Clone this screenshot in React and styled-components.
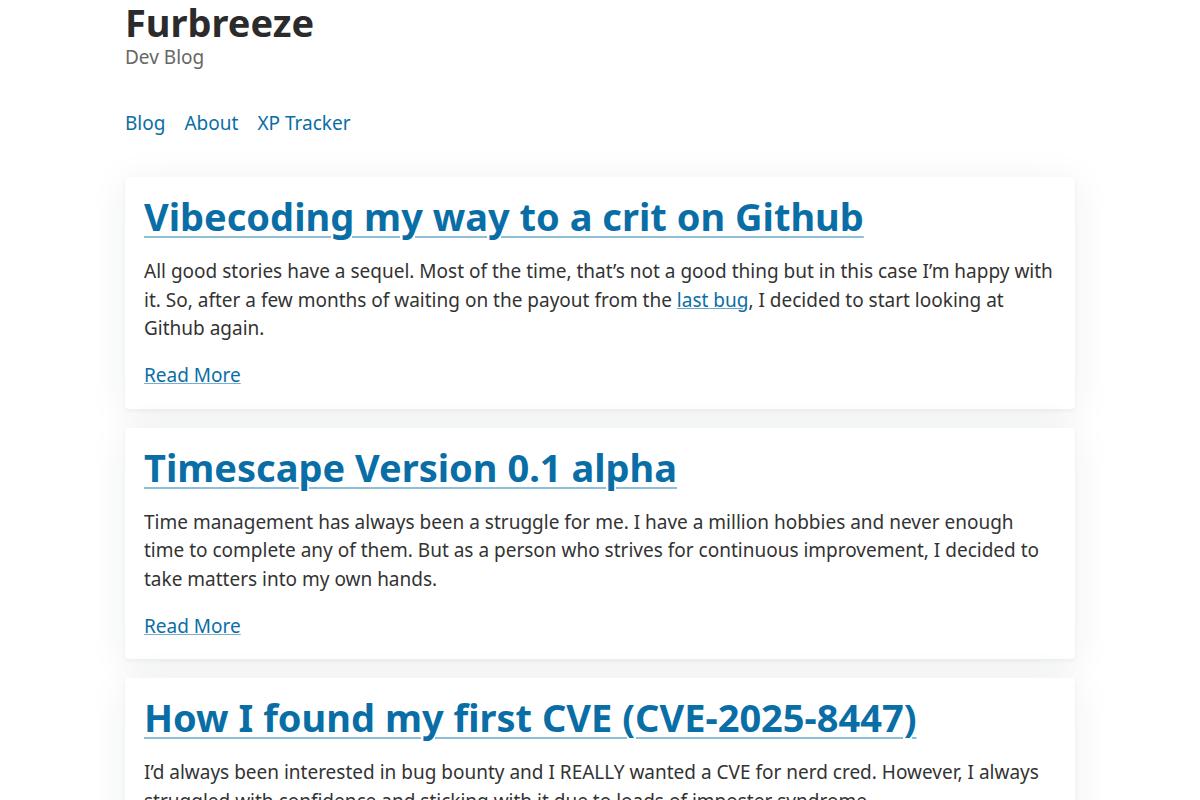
import React from 'react'
import styled, { createGlobalStyle } from 'styled-components'

const GlobalStyle = createGlobalStyle`
  body {
    margin: 0;
    background: #ffffff;
    font-family: "Noto Sans", "Open Sans", sans-serif;
    color: #333;
  }
`

const Page = styled.div`
  width: 950px;
  margin: 0 auto;
`

const Header = styled.header`
  display: flex;
  flex-direction: column;
`

const SiteTitle = styled.h1`
  margin: 0;
  font-size: 38px;
  line-height: 45px;
  font-weight: 700;
  color: #2b2b2b;
`

const Tagline = styled.div`
  font-size: 19px;
  line-height: 24px;
  color: #666;
`

const Nav = styled.nav`
  display: flex;
  gap: 19px;
  margin-top: 40px;
`

const NavLink = styled.a`
  font-size: 19px;
  line-height: 28.5px;
  color: #0a6ea6;
  text-decoration: none;
`

const Posts = styled.div`
  display: flex;
  flex-direction: column;
  gap: 19px;
  margin-top: 39.5px;
`

const Card = styled.article`
  background: #fff;
  border-radius: 4px;
  padding: 19px;
  box-shadow: 0 2px 4px rgba(30, 40, 60, 0.05), 0 6px 40px rgba(30, 40, 60, 0.07);
`

const PostTitle = styled.h2`
  margin: 0 0 20px;
  font-size: 38px;
  line-height: 41px;
  font-weight: 700;

  a {
    color: #0a6ea6;
    text-decoration: underline;
    text-decoration-color: rgba(10, 110, 166, 0.45);
    text-decoration-thickness: 2px;
    text-underline-offset: 5px;
  }
`

const Excerpt = styled.p`
  margin: 0 0 18.5px;
  font-size: 19px;
  line-height: 28.5px;
  color: #333;
`

const InlineLink = styled.a`
  color: #0a6ea6;
  text-decoration: underline;
  text-decoration-color: rgba(10, 110, 166, 0.6);
`

const ReadMore = styled.a`
  display: inline-block;
  font-size: 19px;
  line-height: 28.5px;
  color: #0a6ea6;
  text-decoration: underline;
  text-decoration-color: rgba(10, 110, 166, 0.55);
`

const posts = [
  {
    title: 'Vibecoding my way to a crit on Github',
    body: (
      <>
        All good stories have a sequel. Most of the time, that’s not a good thing but in this case I’m happy with
        it. So, after a few months of waiting on the payout from the <InlineLink href='#'>last bug</InlineLink>, I decided to start looking at
        Github again.
      </>
    )
  },
  {
    title: 'Timescape Version 0.1 alpha',
    body: 'Time management has always been a struggle for me. I have a million hobbies and never enough time to complete any of them. But as a person who strives for continuous improvement, I decided to take matters into my own hands.'
  },
  {
    title: 'How I found my first CVE (CVE-2025-8447)',
    body: 'I’d always been interested in bug bounty and I REALLY wanted a CVE for nerd cred. However, I always struggled with confidence and sticking with it due to loads of imposter syndrome.'
  }
]

export default function App() {
  return (
    <>
      <GlobalStyle />
      <Page>
        <Header>
          <SiteTitle>Furbreeze</SiteTitle>
          <Tagline>Dev Blog</Tagline>
        </Header>
        <Nav>
          <NavLink href='#'>Blog</NavLink>
          <NavLink href='#'>About</NavLink>
          <NavLink href='#'>XP Tracker</NavLink>
        </Nav>
        <Posts>
          {posts.map(post => (
            <Card key={post.title}>
              <PostTitle><a href='#'>{post.title}</a></PostTitle>
              <Excerpt>{post.body}</Excerpt>
              <ReadMore href='#'>Read More</ReadMore>
            </Card>
          ))}
        </Posts>
      </Page>
    </>
  )
}
